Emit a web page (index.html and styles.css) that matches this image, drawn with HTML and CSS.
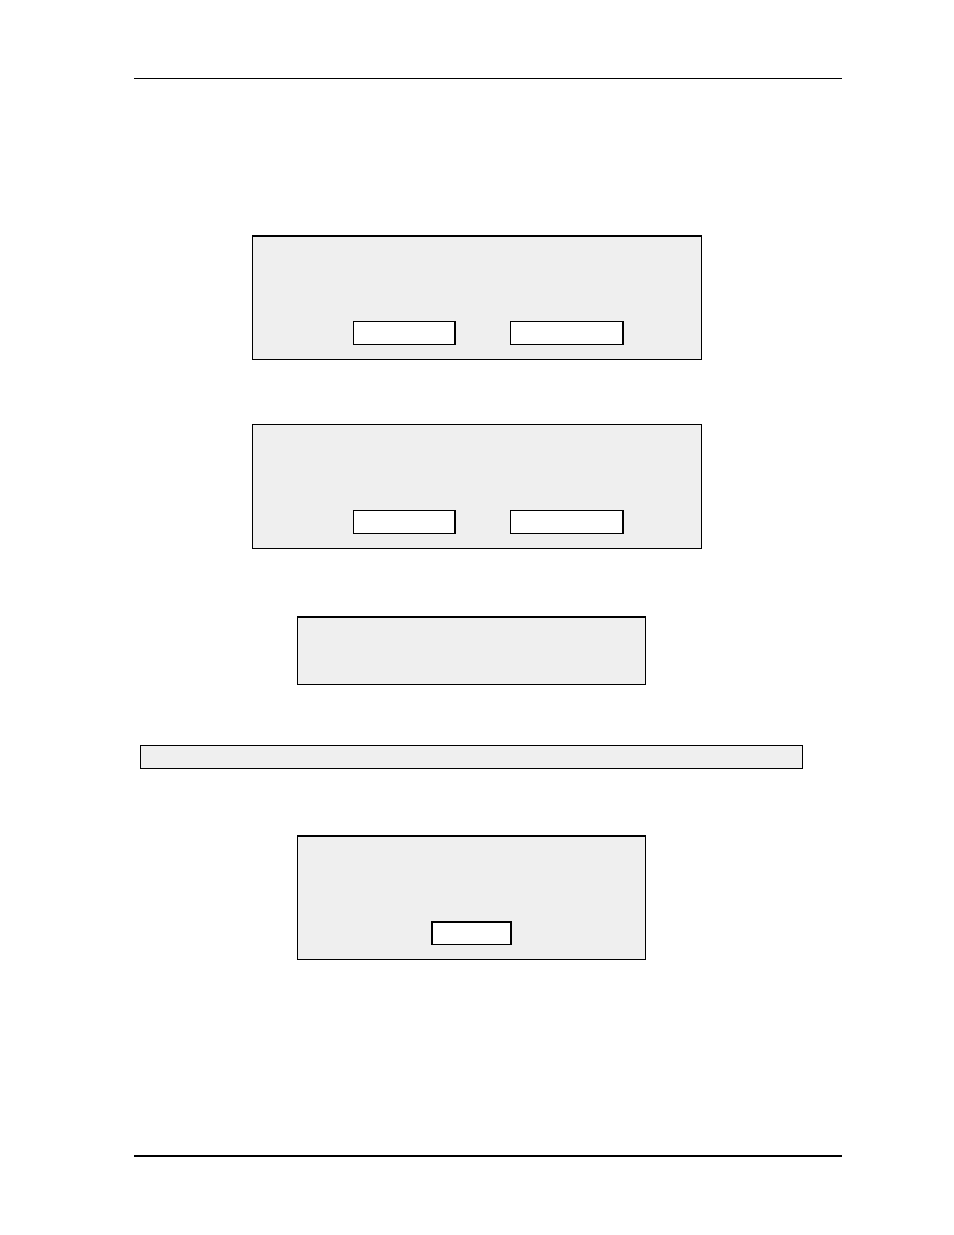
FILE: index.html
```html
<!DOCTYPE html>
<html lang="en">
<head>
    <meta charset="UTF-8">
    <meta name="viewport" content="width=device-width, initial-scale=1.0">
    <title>Dialogs</title>
    <link rel="stylesheet" href="styles.css">
</head>
<body>
    <div class="page">
        <main class="content">
            <section class="dialog dialog-wide thick-top">
                <div class="actions">
                    <button type="button" class="btn" aria-label="Confirm"></button>
                    <button type="button" class="btn btn-large" aria-label="Cancel"></button>
                </div>
            </section>

            <section class="dialog dialog-wide second">
                <div class="actions">
                    <button type="button" class="btn" aria-label="Confirm"></button>
                    <button type="button" class="btn btn-large" aria-label="Cancel"></button>
                </div>
            </section>

            <section class="dialog dialog-small thick-top message"></section>

            <div class="status-bar"></div>

            <section class="dialog dialog-small thick-top">
                <div class="actions">
                    <button type="button" class="btn btn-small" aria-label="OK"></button>
                </div>
            </section>
        </main>
    </div>
</body>
</html>
```

FILE: styles.css
```css
* {
    box-sizing: border-box;
}
body {
    font-family: "Liberation Sans", Arial, sans-serif;
    margin: 0;
    background-color: #fff;
}
.page {
    padding: 78px 112px 78px 134px;
}
.content {
    border-top: 1px solid #000;
    border-bottom: 2px solid #000;
    padding: 156px 33px 195px 0;
}
.dialog {
    display: flex;
    flex-direction: column;
    justify-content: flex-end;
    min-height: 125px;
    margin: 0 auto;
    padding-bottom: 14px;
    background-color: #efefef;
    border: 1px solid #000;
}
.thick-top {
    border-top-width: 2px;
}
.dialog-wide {
    max-width: 450px;
    margin-left: 118px;
}
.dialog-small {
    max-width: 349px;
}
.second {
    margin-top: 64px;
}
.message {
    min-height: 69px;
    margin-top: 67px;
}
.actions {
    display: flex;
    justify-content: center;
}
.dialog-wide .actions {
    justify-content: flex-start;
    gap: 54px;
    padding-left: 100px;
}
.btn {
    width: 103px;
    height: 24px;
    padding: 0;
    background-color: #fff;
    border: 1px solid #000;
    border-right-width: 2px;
    border-radius: 0;
    cursor: pointer;
}
.btn-large {
    width: 114px;
}
.btn-small {
    width: 81px;
    border-top-width: 2px;
    border-left-width: 2px;
}
.status-bar {
    height: 24px;
    margin: 60px 6px 66px;
    background-color: #efefef;
    border: 1px solid #000;
}
```
